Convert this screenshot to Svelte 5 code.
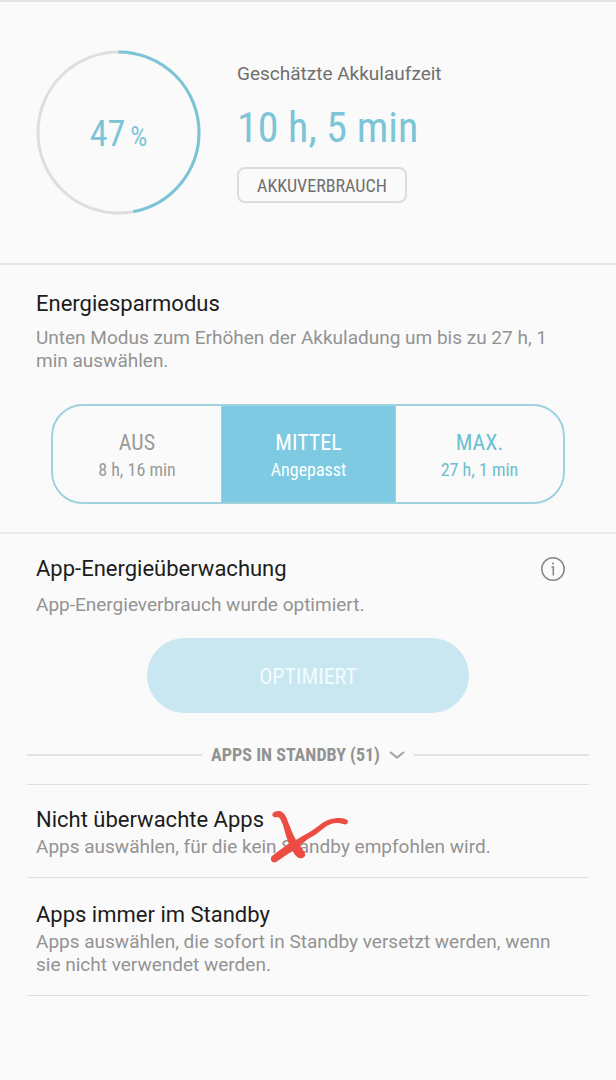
<script lang="ts">
	const percent = 47;
	const radius = 81;
	const circumference = 2 * Math.PI * radius;

	const modes = [
		{ id: 'off', label: 'AUS', info: '8 h, 16 min' },
		{ id: 'mid', label: 'MITTEL', info: 'Angepasst' },
		{ id: 'max', label: 'MAX.', info: '27 h, 1 min' }
	];

	let selected = $state('mid');
</script>

<main class="battery-page">
	<section class="summary">
		<div class="gauge">
			<svg viewBox="0 0 166 166" aria-hidden="true">
				<circle cx="83" cy="83" r={radius} stroke="#dedede" />
				<circle
					cx="83"
					cy="83"
					r={radius}
					stroke="#7cc5d8"
					stroke-dasharray="{(circumference * percent) / 100} {circumference}"
					transform="rotate(-90 83 83)"
				/>
			</svg>
			<p class="percent">{percent}<small>%</small></p>
		</div>
		<div class="estimate">
			<h1>Geschätzte Akkulaufzeit</h1>
			<p class="time">10 h, 5 min</p>
			<button class="usage">AKKUVERBRAUCH</button>
		</div>
	</section>

	<section class="power-mode">
		<h2>Energiesparmodus</h2>
		<p class="description">Unten Modus zum Erhöhen der Akkuladung um bis zu 27 h, 1 min auswählen.</p>
		<div class="modes">
			{#each modes as mode}
				<button
					class="mode {mode.id}"
					class:selected={selected === mode.id}
					aria-pressed={selected === mode.id}
					onclick={() => (selected = mode.id)}
				>
					<span class="mode-label">{mode.label}</span>
					<span class="mode-info">{mode.info}</span>
				</button>
			{/each}
		</div>
	</section>

	<section class="monitor">
		<div class="monitor-head">
			<h2>App-Energieüberwachung</h2>
			<button class="info" aria-label="Info">
				<svg width="26" height="26" viewBox="0 0 26 26" fill="none" stroke="#858585">
					<circle cx="13" cy="13" r="11.2" stroke-width="1.5" />
					<path d="M11.5 11H13.3V19.5" stroke-width="1.5" />
					<circle cx="13" cy="7.5" r="1" fill="#858585" stroke="none" />
				</svg>
			</button>
		</div>
		<p class="description">App-Energieverbrauch wurde optimiert.</p>
		<button class="optimize" disabled>OPTIMIERT</button>
	</section>

	<button class="standby">
		<span>APPS IN STANDBY (51)</span>
		<svg width="16" height="12" viewBox="0 0 16 12" fill="none" stroke="#a6a6a6" stroke-width="2.2">
			<path d="M1 3L8 8.500L15 3" />
		</svg>
	</button>

	<ul class="links">
		<li>
			<a href="#unmonitored">
				<h2>Nicht überwachte Apps</h2>
				<p class="description">Apps auswählen, für die kein Standby empfohlen wird.</p>
			</a>
			<svg class="mark" width="78" height="54" viewBox="0 0 78 54" fill="#ed4c42" aria-hidden="true">
				<path d="M2 3C3 1 9 0 11 2C14 4 16 8 17 12C19 16 20 20 22 24C24 29 27 33 30 37C32 40 34 42 34 44C35 47 31 49 28 48C25 47 22 42 20 38C16 31 14 22 12 15C10 10 9 7 6 7C3 8 0 6 2 3Z" />
				<path d="M1 46C6 42 12 38 17 34C24 31 31 26 37 23C42 20 46 17 50 14C55 10 62 8 68 8C72 8 76 9 77 11C77 14 75 15 72 14C66 12 59 13 53 18C48 22 43 26 37 29C32 33 27 37 22 41C16 44 10 49 5 52C1 54-2 49 1 46Z" />
			</svg>
		</li>
		<li>
			<a href="#always-standby">
				<h2>Apps immer im Standby</h2>
				<p class="description">Apps auswählen, die sofort in Standby versetzt werden, wenn sie nicht verwendet werden.</p>
			</a>
		</li>
	</ul>
</main>

<style>
	:global(body) {
		margin: 0;
		background: #fafafa;
	}
	.battery-page {
		border-top: 2px solid #e4e4e4;
		font-family: Roboto, sans-serif;
		color: #1c1c1c;
	}
	h1,
	h2,
	p,
	ul {
		margin: 0;
		padding: 0;
		font-weight: 400;
	}
	button {
		padding: 0;
		border: none;
		background: none;
		cursor: pointer;
	}
	button,
	.percent,
	.time {
		font-family: 'Roboto Condensed', Roboto, sans-serif;
	}
	h2 {
		font-size: 22px;
		line-height: 30px;
	}
	.description {
		font-size: 19px;
		line-height: 23px;
		color: #939393;
	}
	.summary {
		display: flex;
		gap: 36px;
		padding: 48px 36px;
		border-bottom: 2px solid #e4e4e4;
	}
	.gauge {
		display: grid;
		place-items: center;
		width: 165px;
		height: 165px;
	}
	.gauge > * {
		grid-area: 1 / 1;
	}
	.gauge svg {
		width: 100%;
		fill: none;
		stroke-width: 3;
	}
	.percent {
		display: flex;
		align-items: baseline;
		gap: 5px;
		padding-top: 6px;
		font-size: 36px;
		line-height: 40px;
		color: #7cc5d8;
	}
	.percent small {
		font-size: 27px;
	}
	h1 {
		margin-top: 10px;
		font-size: 19px;
		line-height: 28px;
		color: #6f6f6f;
	}
	.time {
		margin-top: 16px;
		font-size: 42px;
		line-height: 48px;
		color: #7cc5d8;
	}
	.usage {
		height: 36px;
		margin-top: 15px;
		padding: 0 18px;
		border: 2px solid #dcdcdc;
		border-radius: 8px;
		font-size: 18px;
		color: #6f6f6f;
	}
	.power-mode {
		padding: 24px 36px 28px;
		border-bottom: 2px solid #ebebeb;
	}
	.power-mode .description {
		margin-top: 7px;
	}
	.modes {
		display: grid;
		grid-template-columns: 1fr 174px 1fr;
		height: 96px;
		margin: 32px 15px 0;
		border: 2px solid #9dd2de;
		border-radius: 32px;
		overflow: hidden;
	}
	.mode {
		display: flex;
		flex-direction: column;
		align-items: center;
		justify-content: center;
		padding-top: 4px;
		color: #9a9a9a;
	}
	.mode + .mode {
		border-left: 1px solid #9dd2de;
	}
	.mode-label {
		font-size: 22px;
		line-height: 28px;
	}
	.mode-info {
		font-size: 18px;
		line-height: 26px;
	}
	.mode.max {
		color: #6abfd0;
	}
	.mode.selected {
		background: #7dcae2;
		color: #fff;
	}
	.monitor {
		padding: 20px 36px 0;
	}
	.monitor-head {
		display: flex;
		justify-content: space-between;
		align-items: center;
		padding-right: 14px;
	}
	.info {
		display: flex;
	}
	.monitor .description {
		margin-top: 9px;
	}
	.optimize {
		display: block;
		width: 322px;
		max-width: 100%;
		height: 75px;
		margin: 22px auto 0;
		padding-top: 2px;
		border-radius: 38px;
		background: #c9e7f0;
		font-size: 22px;
		color: #f2fbff;
	}
	.standby {
		display: flex;
		align-items: center;
		gap: 9px;
		box-sizing: border-box;
		width: 100%;
		margin-top: 28px;
		padding: 0 27px;
		font-size: 18px;
		font-weight: 700;
		line-height: 28px;
		color: #929292;
	}
	.standby::before,
	.standby::after {
		content: '';
		flex: 1;
		border-top: 2px solid #e2e2e2;
	}
	.links {
		margin: 15px 27px 0;
		border-top: 1px solid #dfdfdf;
		list-style: none;
	}
	.links li {
		position: relative;
		padding: 20px 20px 19px 9px;
		border-bottom: 1px solid #dfdfdf;
	}
	.links li + li {
		padding-top: 22px;
	}
	.links a {
		color: inherit;
		text-decoration: none;
	}
	/* hand-drawn cross lying over the entry */
	.mark {
		position: absolute;
		top: 25px;
		left: 244px;
	}
</style>
